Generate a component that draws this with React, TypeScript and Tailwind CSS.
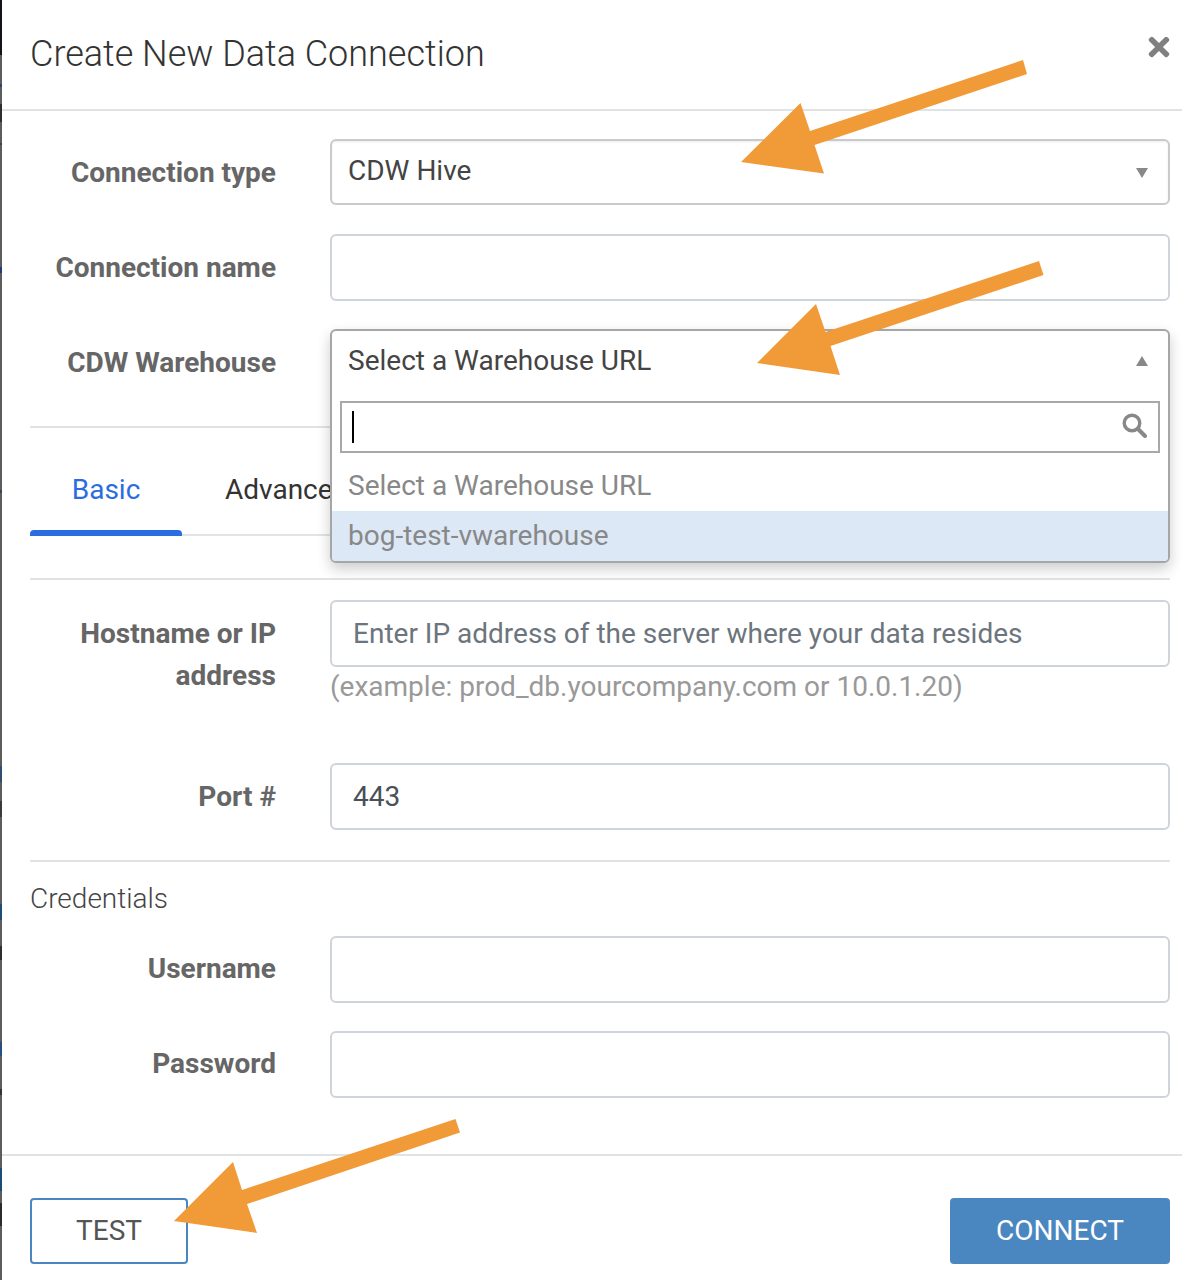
import { FaTimes } from 'react-icons/fa';

const inputClass = "h-[67px] flex-1 rounded-[6px] border-2 border-[#ced4da] bg-white flex items-center px-[21px] pt-[1px] text-[28px]";
const labelClass = "w-[246px] shrink-0 text-right text-[28px] font-bold leading-[42px] text-[#666666] mr-[54px]";

// the edge of the page behind the dialog, [height, colour]
const edge: [number, string][] = [
    [55, "#111418"], [29, "#5c5c5c"], [3, "#27456f"], [17, "#5c5c5c"], [18, "#2e2e2e"],
    [21, "#5c5c5c"], [2, "#27456f"], [122, "#5c5c5c"], [6, "#1f3f78"], [217, "#5c5c5c"],
    [3, "#33485f"], [273, "#5c5c5c"], [16, "#2f4f70"], [19, "#5c5c5c"], [16, "#3a3a3a"],
    [87, "#5c5c5c"], [16, "#23497a"], [26, "#5c5c5c"], [14, "#2e2e2e"], [82, "#5c5c5c"],
    [14, "#28507a"], [33, "#5c5c5c"], [6, "#333333"], [73, "#5c5c5c"], [23, "#1f4a78"],
    [12, "#5c5c5c"], [23, "#2b2b2b"], [54, "#5c5c5c"],
];

const Row = ({ label, value, high }: { label: string; value?: string; high?: boolean }) => (
    <div className="flex items-center">
        <label className={high ? labelClass + " -mt-[1px]" : labelClass + " pt-[1px]"}>{label}</label>
        <div className={inputClass + " text-[#495057]"}>{value}</div>
    </div>
);

const Arrows = () => (
    <svg width="1182" height="1280" viewBox="0 0 1182 1280" className="absolute left-0 top-0 z-20 pointer-events-none">
        <polygon fill="#f19a38" points="1023,60 1027,74 814.5,145 824,173.5 741,162 800.5,103 810,131" />
        <polygon fill="#f19a38" points="1039,261 1043.5,275 830.5,346 840,375 757,363 816,304 825.5,332" />
        <polygon fill="#f19a38" points="455.5,1119 460,1132.5 247,1204 257,1233 174,1221 233,1162 242,1190" />
    </svg>
);

export default function App() {
    return (
        <div className="relative w-[1182px] h-[1280px] overflow-hidden bg-white font-['Roboto',sans-serif] flex">
            <div className="w-[2px] shrink-0 flex flex-col">
                {edge.map(([h, c], i) => (
                    <div key={i} className="shrink-0" style={{ height: h, background: c }} />
                ))}
            </div>
            <div className="flex-1 flex flex-col">
                <div className="h-[111px] shrink-0 border-b-2 border-[#dfe3e6] pl-[28px] pr-[8px] flex items-start justify-between">
                    <h1 className="text-[36px] font-light leading-[54px] mt-[27px] text-[#333333]">Create New Data Connection</h1>
                    <FaTimes className="mt-[32px] text-[30px] text-[#808080]" />
                </div>

                <div className="pl-[28px] pr-[12px] pt-[28px] flex flex-col">
                    <div className="flex items-center">
                        <label className={labelClass + " pt-[2px]"}>Connection type</label>
                        <div className="relative h-[66px] flex-1 rounded-[6px] border-2 border-[#c8cbce] bg-white shadow-[inset_0_1px_2px_rgba(0,0,0,0.08)] flex items-center pl-[16px] pb-[2px] text-[28px] text-[#444444]">
                            CDW Hive
                            <svg width="12" height="10" viewBox="0 0 12 10" className="absolute right-[20px] top-[27px]">
                                <polygon points="0,0 12,0 6,10" fill="#888888" />
                            </svg>
                        </div>
                    </div>
                    <div className="mt-[29px]"><Row label="Connection name" /></div>

                    <div className="mt-[28px] flex items-center">
                        <label className={labelClass + " pt-[2px]"}>CDW Warehouse</label>
                        <div className="relative h-[66px] flex-1 z-10">
                            <div className="absolute left-0 right-0 top-0 h-[234px] rounded-[6px] border-2 border-[#a6a6a6] bg-white shadow-[0_6px_14px_rgba(0,0,0,0.2)] overflow-hidden text-[28px]">
                                <div className="relative h-[70px] pl-[16px] pt-[9px] leading-[42px] text-[#444444]">
                                    Select a Warehouse URL
                                    <svg width="12" height="10" viewBox="0 0 12 10" className="absolute right-[20px] top-[25px]">
                                        <polygon points="0,10 12,10 6,0" fill="#888888" />
                                    </svg>
                                </div>
                                <div className="mx-[8px] h-[52px] border-2 border-[#a8a8a8] flex items-center justify-between pl-[10px] pr-[11px]">
                                    <div className="w-[2px] h-[32px] bg-black" />
                                    <svg width="25" height="25" viewBox="0 0 25 25" className="mb-[3px]">
                                        <circle cx="10" cy="10" r="7.8" fill="none" stroke="#888888" strokeWidth="3.4" />
                                        <line x1="16" y1="16" x2="23" y2="23" stroke="#888888" strokeWidth="4" strokeLinecap="round" />
                                    </svg>
                                </div>
                                <div className="h-[58px] pl-[16px] pt-[12px] leading-[42px] text-[#888888]">Select a Warehouse URL</div>
                                <div className="h-[51px] pl-[16px] pt-[4px] leading-[42px] text-[#888888] bg-[#dce8f5]">bog-test-vwarehouse</div>
                            </div>
                        </div>
                    </div>

                    <hr className="mt-[31px] border-t-2 border-[#e2e2e2]" />

                    <div className="h-[108px] flex items-stretch border-b-2 border-[#e0e4e7]">
                        <div className="w-[152px] -mb-[2px] flex flex-col justify-between text-center text-[28px] pt-[41px] leading-[42px] text-[#2a6de0]">
                            Basic
                            <div className="h-[6px] rounded-t-[4px] bg-[#2a6de0]" />
                        </div>
                        <div className="ml-[43px] text-[28px] pt-[41px] leading-[42px] text-[#333333]">Advanced</div>
                    </div>

                    <hr className="mt-[42px] border-t-2 border-[#e2e2e2]" />

                    <div className="mt-[20px] flex items-start">
                        <label className={labelClass + " mt-[13px]"}>
                            Hostname or IP address
                        </label>
                        <div className="flex-1">
                            <div className={inputClass + " text-[#6c757d]"}>Enter IP address of the server where your data resides</div>
                            <div className="-mt-[1px] text-[28px] leading-[42px] text-[#999999]">(example: prod_db.yourcompany.com or 10.0.1.20)</div>
                        </div>
                    </div>

                    <div className="mt-[55px]"><Row label="Port #" value="443" /></div>

                    <hr className="mt-[30px] border-t-2 border-[#e2e2e2]" />

                    <div className="mt-[16px] text-[28px] font-light leading-[42px] text-[#444444]">Credentials</div>

                    <div className="mt-[16px]"><Row label="Username" high /></div>
                    <div className="mt-[28px]"><Row label="Password" high /></div>
                </div>

                <div className="mt-[56px] border-t-2 border-[#dfe3e6] pl-[28px] pr-[12px] pt-[42px] flex justify-between">
                    <button className="w-[158px] h-[66px] rounded-[4px] border-2 border-[#4a86c0] bg-white text-[28px] text-[#555555]">TEST</button>
                    <button className="w-[220px] h-[66px] rounded-[4px] bg-[#4a87c0] text-[28px] text-white">CONNECT</button>
                </div>
            </div>
            <Arrows />
        </div>
    );
}
